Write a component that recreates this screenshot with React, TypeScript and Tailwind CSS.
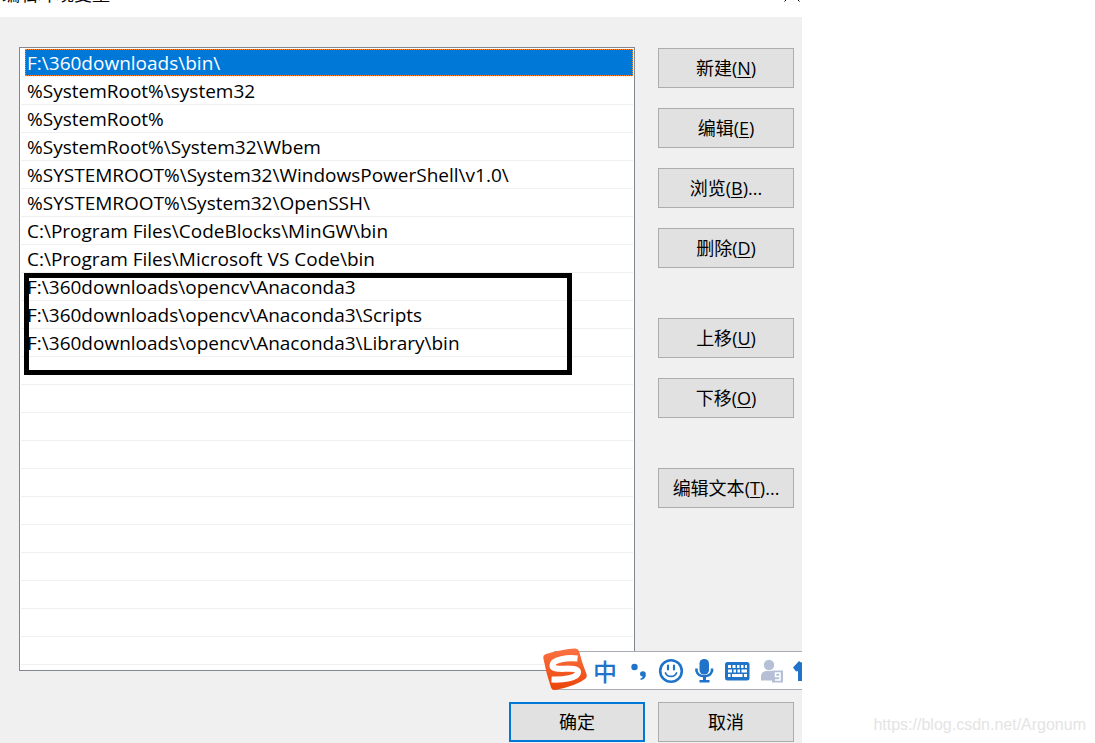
import type { ReactNode } from "react";

interface ActionProps {
  label: string;
  hotkey?: string;
  suffix?: string;
  primary?: boolean;
}

const paths = [
  "F:\\360downloads\\bin\\",
  "%SystemRoot%\\system32",
  "%SystemRoot%",
  "%SystemRoot%\\System32\\Wbem",
  "%SYSTEMROOT%\\System32\\WindowsPowerShell\\v1.0\\",
  "%SYSTEMROOT%\\System32\\OpenSSH\\",
  "C:\\Program Files\\CodeBlocks\\MinGW\\bin",
  "C:\\Program Files\\Microsoft VS Code\\bin",
  "F:\\360downloads\\opencv\\Anaconda3",
  "F:\\360downloads\\opencv\\Anaconda3\\Scripts",
  "F:\\360downloads\\opencv\\Anaconda3\\Library\\bin",
];

const ROW_COUNT = 22;
const rows = Array.from({ length: ROW_COUNT }, (_, i) => paths[i] ?? "");

function ActionButton({ label, hotkey, suffix, primary }: ActionProps) {
  const border = primary
    ? "border-2 border-[#0078d7]"
    : "border border-[#adadad]";

  return (
    <button
      type="button"
      className={
        "w-[136px] h-10 shrink-0 bg-[#e1e1e1] text-lg leading-6 whitespace-nowrap " +
        border
      }
    >
      {label}
      {hotkey && (
        <>
          (<span className="underline underline-offset-2">{hotkey}</span>)
        </>
      )}
      {suffix}
    </button>
  );
}

function PathList() {
  return (
    <ul className="relative flex-1 min-w-0 pt-px pb-[5px] px-px bg-white border border-[#828790]">
      {rows.map((path, i) => (
        <li key={i} className="h-7 pl-1 border-b border-[#f0f0f0]">
          <div
            className={
              "h-[27px] pl-0.5 text-[19px] leading-[29px] whitespace-nowrap overflow-hidden " +
              (i === 0
                ? "bg-[#0078d7] text-white outline-1 -outline-offset-1 outline-dotted outline-[#ff8728]"
                : "")
            }
          >
            {path}
          </div>
        </li>
      ))}

      {/* marker round the Anaconda entries */}
      <li
        aria-hidden="true"
        className="absolute left-1 top-[225px] w-[548px] h-[102px] border-5 border-black"
      />
    </ul>
  );
}

function ImeButton({ name, children }: { name: string; children: ReactNode }) {
  return (
    <button
      type="button"
      aria-label={name}
      className="w-[26px] h-[26px] shrink-0 flex items-center justify-center"
    >
      {children}
    </button>
  );
}

function ImeBar() {
  return (
    <div className="absolute right-0 top-[634px] w-[248px] h-[39px] bg-white border-y border-[#a9abb5] text-[#1f74c9]">
      {/* logo */}
      <svg
        className="absolute -left-[11px] -top-1"
        width="45"
        height="43"
        viewBox="0 0 45 43"
        aria-hidden="true"
      >
        <defs>
          <linearGradient id="logo" x1="0" y1="0" x2="0" y2="1">
            <stop offset="0" stopColor="#fb7244" />
            <stop offset="1" stopColor="#ec4407" />
          </linearGradient>
        </defs>
        <path
          d="M3 6 Q20 1 32 .5 Q35 .3 36 3 Q39 15 43.500 26 Q44.500 29 42 31 Q33 38 12 42 Q9 42.500 8 39.500 Q3 25 .3 10 Q0 7 3 6Z"
          fill="url(#logo)"
        />
        <path
          d="M34.500 10.500 C25 9.500 9.500 11 9.500 17.500 C9.500 24.500 34.500 17 35 24 C35 30 20 32 8.500 31.500"
          fill="none"
          stroke="#fff"
          strokeWidth="6.200"
        />
      </svg>

      <div className="h-full pl-[38px] flex items-center gap-[7px] overflow-hidden">
        <button
          type="button"
          className="w-[26px] h-[26px] shrink-0 text-2xl leading-[26px] font-medium font-['Noto_Sans_CJK_SC',sans-serif]"
        >
          中
        </button>

        <ImeButton name="标点">
          <svg width="26" height="26" viewBox="0 0 26 26" fill="currentColor">
            <circle cx="9.500" cy="9" r="3.200" />
            <path d="M15 16.300a2.900 2.900 0 0 1 5.800-.2c.3 3.200-1.400 5.400-5 6l-.5-1.500c1.500-.4 2.300-1.100 2.400-2A2.600 2.600 0 0 1 15 16.300Z" />
          </svg>
        </ImeButton>

        <ImeButton name="表情">
          <svg
            width="26"
            height="26"
            viewBox="0 0 26 26"
            fill="none"
            stroke="currentColor"
          >
            <circle cx="13" cy="13" r="10.800" strokeWidth="2.600" />
            <path
              d="M10 7.500v4M16 7.500v4"
              strokeWidth="2.200"
              strokeLinecap="round"
            />
            <path
              d="M7.500 15c2 4.500 9 4.500 11 0"
              strokeWidth="1.800"
              strokeLinecap="round"
            />
          </svg>
        </ImeButton>

        <ImeButton name="语音">
          <svg width="26" height="26" viewBox="0 0 26 26" fill="currentColor">
            <rect x="8.500" y="1" width="9.500" height="15.500" rx="4.500" />
            <path
              d="M5.500 10.500v2.500a8 7 0 0 0 15.500 0v-2.500"
              fill="none"
              stroke="currentColor"
              strokeWidth="2.600"
            />
            <path d="M12 19h3v3h3.500v2.500h-10V22H12Z" />
          </svg>
        </ImeButton>

        <ImeButton name="软键盘">
          <svg width="26" height="26" viewBox="0 0 26 26">
            <rect
              x="1"
              y="4"
              width="24.500"
              height="18.500"
              rx="2.500"
              fill="currentColor"
            />
            <path
              d="M4 7h3v3H4ZM8.500 7h3v3h-3ZM13 7h2.500v3H13ZM17 7h2.500v3H17ZM21 7h2v3h-2ZM4 11.500h4v3H4ZM9.500 11.500h2.500v3H9.500ZM13.500 11.500h2.500v3h-2.500ZM17.500 11.500h5.500v3h-5.500ZM4 16h2.500v3H4ZM8 16h10.500v3H8ZM20 16h3v3h-3Z"
              fill="#fff"
            />
          </svg>
        </ImeButton>

        <ImeButton name="账号">
          <svg width="26" height="26" viewBox="0 0 26 26" fill="#b5c0d6">
            <circle cx="12" cy="7" r="5.200" />
            <path d="M4 22.500v-4c0-4 3-5.500 6-5.500h6c3 0 5 1.500 5 4v5.500Z" />
            <rect x="15" y="12.500" width="11" height="12" />
            <path
              d="M23 20V15h-4.500v3.500H23v3.500h-5"
              fill="none"
              stroke="#fff"
              strokeWidth="1.500"
            />
          </svg>
        </ImeButton>

        <ImeButton name="皮肤">
          <svg width="26" height="26" viewBox="0 0 26 26" fill="currentColor">
            <path d="M9 3c2 2.500 7 2.500 9 0l8 6-3 5-3-1v10H8V13l-2 .5L3 9.500Z" />
          </svg>
        </ImeButton>
      </div>
    </div>
  );
}

export default function App() {
  return (
    <div className="relative min-h-screen bg-white text-black font-['Open_Sans','Noto_Sans_CJK_SC',sans-serif]">
      <main className="w-full max-w-[802px]">
        {/* title bar */}
        <header className="h-[17px] overflow-hidden flex items-end justify-between pl-0.5 pb-[11px] text-lg leading-6">
          <h1>编辑环境变量</h1>
          <button type="button" aria-label="关闭" className="pb-1 pr-0.5">
            <svg
              width="16"
              height="16"
              viewBox="0 0 16 16"
              stroke="currentColor"
            >
              <path d="M.5 15.500l15-15M.5.500l15 15" />
            </svg>
          </button>
        </header>

        <div className="relative bg-[#f0f0f0] pt-[30px] pb-px pl-[19px] pr-2">
          <div className="flex gap-[23px]">
            <PathList />

            <div className="pt-px flex flex-col gap-[50px]">
              <div className="flex flex-col gap-5">
                <ActionButton label="新建" hotkey="N" />
                <ActionButton label="编辑" hotkey="E" />
                <ActionButton label="浏览" hotkey="B" suffix="..." />
                <ActionButton label="删除" hotkey="D" />
              </div>
              <div className="flex flex-col gap-5">
                <ActionButton label="上移" hotkey="U" />
                <ActionButton label="下移" hotkey="O" />
              </div>
              <ActionButton label="编辑文本" hotkey="T" suffix="..." />
            </div>
          </div>

          <div className="mt-[31px] flex justify-end gap-[13px]">
            <ActionButton label="确定" primary />
            <ActionButton label="取消" />
          </div>

          <ImeBar />
        </div>
      </main>

      <p className="absolute right-[9px] bottom-2 text-base leading-5 text-[#e4e4e4] font-['Liberation_Sans',sans-serif]">
        https://blog.csdn.net/Argonum
      </p>
    </div>
  );
}
